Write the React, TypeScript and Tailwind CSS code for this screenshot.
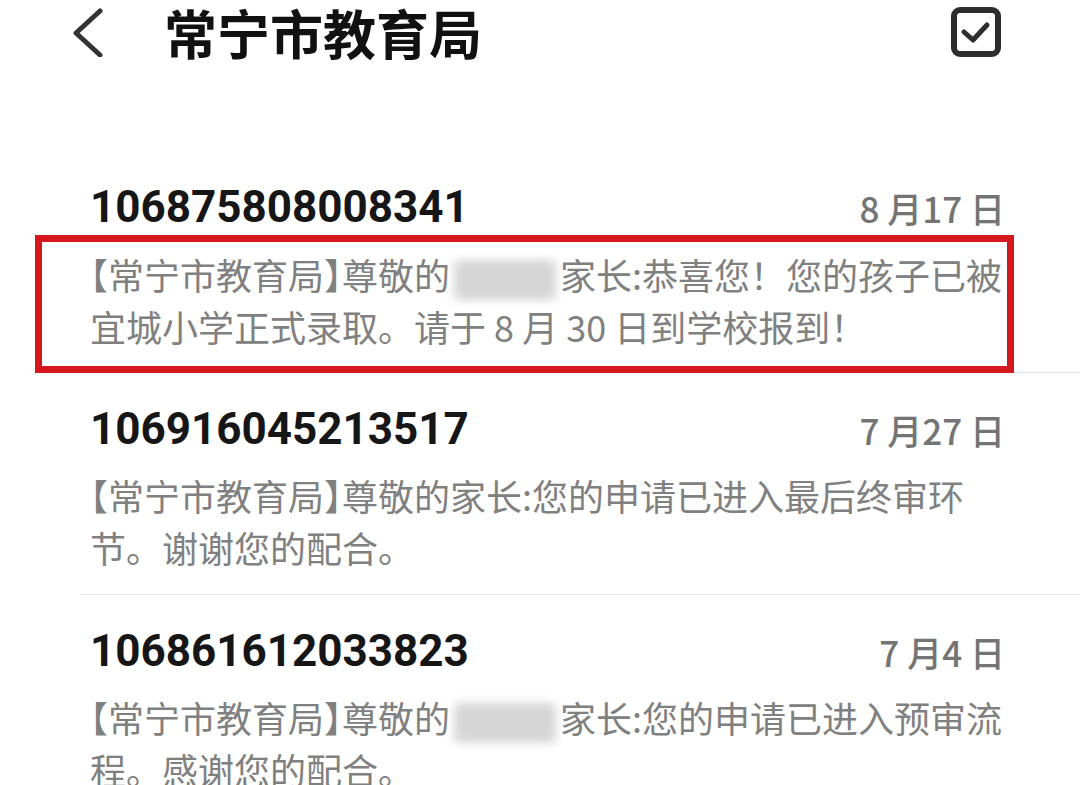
import React from 'react';

const cjk = "font-['Noto_Sans_CJK_SC','Noto_Sans',sans-serif]";
const num = "font-['Roboto','Noto_Sans_CJK_SC',sans-serif]";

function Bracket({ children }: { children: React.ReactNode }) {
  return <span className="[font-feature-settings:'halt']">{children}</span>;
}

function Blur() {
  return (
    <span className="inline-block align-middle w-[102px] h-[40px] mx-[4px] rounded-md bg-[#d6d6d6] blur-[5px]" />
  );
}

function Row({
  phone,
  date,
  lines,
  boxed,
}: {
  phone: string;
  date: React.ReactNode;
  lines: React.ReactNode[];
  boxed?: boolean;
}) {
  const body = lines.map((line, i) => (
    <div key={i} className="h-[52px] leading-[52px] whitespace-nowrap">
      {line}
    </div>
  ));

  return (
    <div className="border-b border-[#e6e6e6] ml-[80px]">
      <div className="pt-[28px] pl-[10px] pr-[75px] h-[84px] flex items-center justify-between">
        <span className={`${num} text-[44px] font-bold text-[#161616] leading-none`}>{phone}</span>
        <span className={`${cjk} text-[35px] font-medium text-[#747474] leading-none`}>{date}</span>
      </div>
      {boxed ? (
        <div className="relative z-10 -ml-[45px] -mb-px w-[979px] border-[7px] border-[#d5161c] pl-[48px] pt-[6px] pb-[14px]">
          <div className={`${cjk} text-[36px] text-[#808080]`}>{body}</div>
        </div>
      ) : (
        <div className={`${cjk} pl-[10px] pt-[12px] pb-[21px] text-[36px] text-[#808080]`}>{body}</div>
      )}
    </div>
  );
}

const head = (
  <>
    <Bracket>【</Bracket>常宁市教育局<Bracket>】</Bracket>尊敬的
  </>
);

export default function App() {
  return (
    <div className="w-[1080px] h-[785px] bg-white overflow-hidden">
      <div className="h-[64px] flex items-center pl-[70px] pr-[78px]">
        <svg width="36" height="50" viewBox="0 0 36 50" fill="none">
          <polyline
            points="30,4 6,26 30,48"
            stroke="#333333"
            strokeWidth="5"
            strokeLinecap="round"
            strokeLinejoin="round"
          />
        </svg>
        <h1 className={`${cjk} ml-[58px] text-[53px] font-bold text-[#111111] leading-[78px]`}>
          常宁市教育局
        </h1>
        <div className="flex-1" />
        <svg width="52" height="52" viewBox="0 0 52 52" fill="none">
          <rect x="4" y="4" width="44" height="44" rx="6" stroke="#2e2e2e" strokeWidth="6" />
          <polyline
            points="14,26 23,34 37,19"
            stroke="#2e2e2e"
            strokeWidth="5"
            strokeLinecap="round"
            strokeLinejoin="round"
          />
        </svg>
      </div>
      <div className="h-[87px]" />

      <Row
        boxed
        phone="106875808008341"
        date={<>8 月17 日</>}
        lines={[
          <>
            {head}
            <Blur />
            家长:恭喜您！您的孩子已被
          </>,
          <>宜城小学正式录取。请于 8 月 30 日到学校报到！</>,
        ]}
      />
      <Row
        phone="106916045213517"
        date={<>7 月27 日</>}
        lines={[
          <>
            {head}家长:您的申请已进入最后终审环
          </>,
          <>节。谢谢您的配合。</>,
        ]}
      />
      <Row
        phone="106861612033823"
        date={<>7 月4 日</>}
        lines={[
          <>
            {head}
            <Blur />
            家长:您的申请已进入预审流
          </>,
          <>程。感谢您的配合。</>,
        ]}
      />
    </div>
  );
}
